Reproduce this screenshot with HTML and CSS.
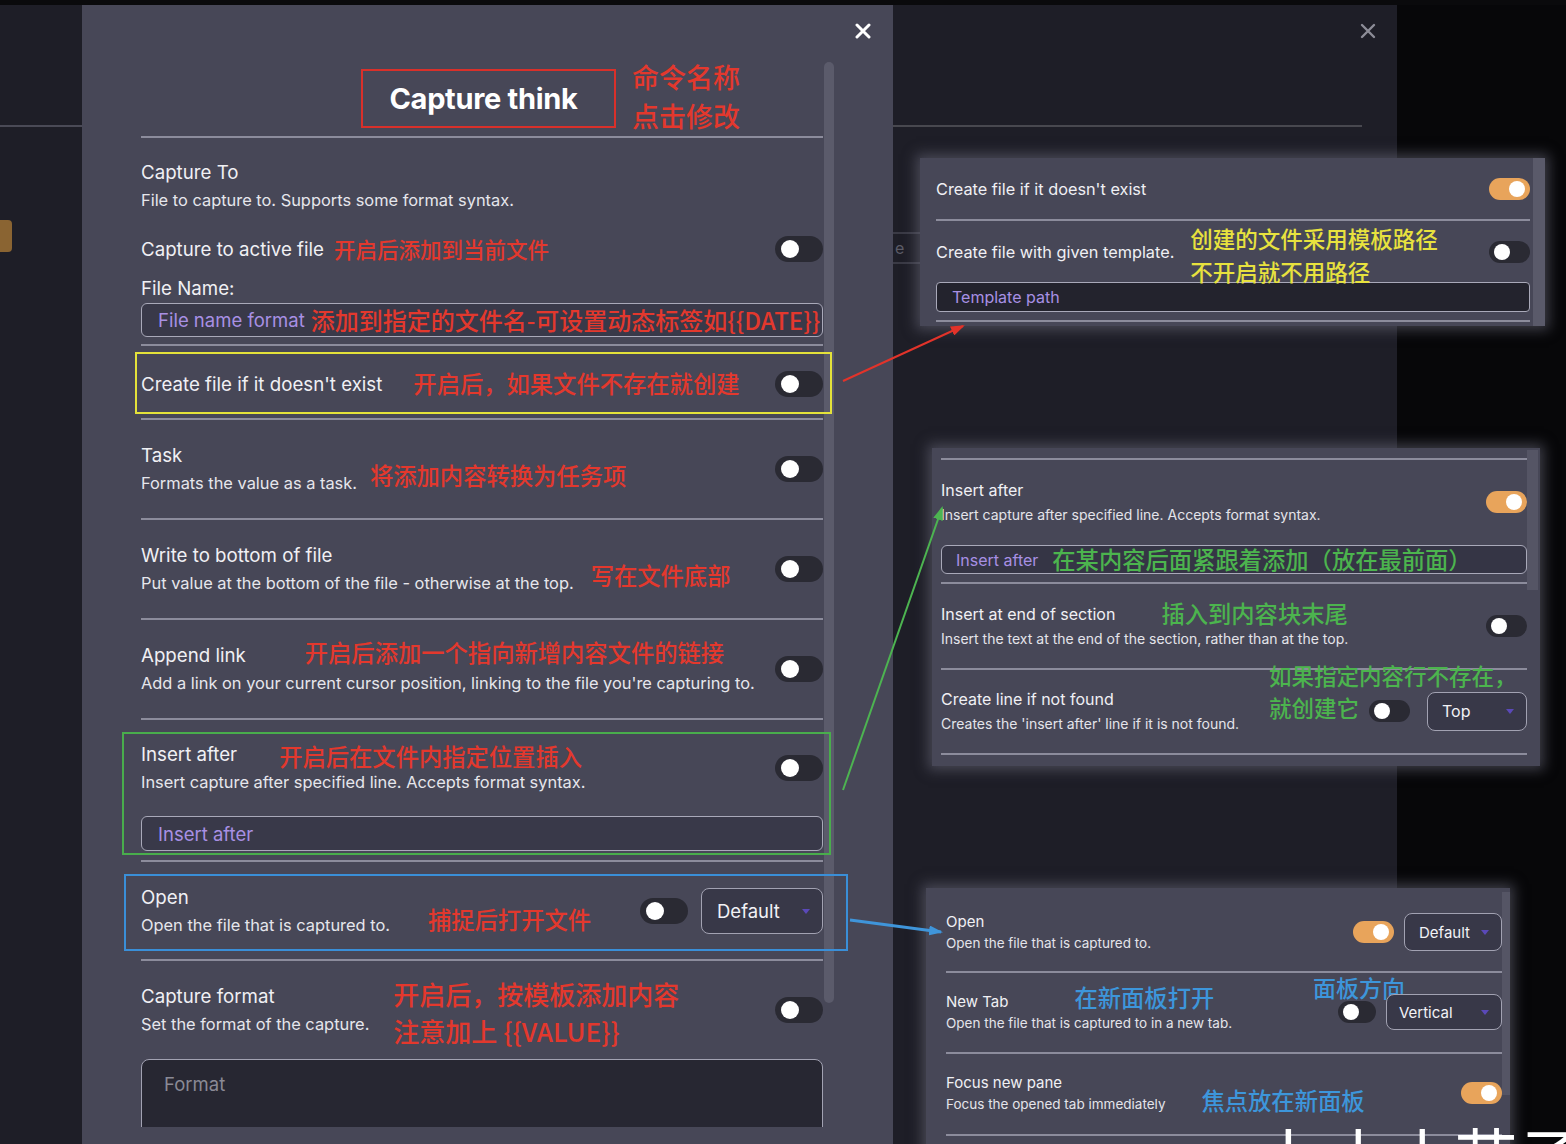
FILE: index.html
```html
<!DOCTYPE html>
<html lang="zh">
<head>
<meta charset="utf-8">
<title>Capture think</title>
<link rel="stylesheet" href="styles.css">
</head>
<body>
<div class="page">
  <div class="topstrip"></div>
  <div class="stage">
    <aside class="leftbg">
      <div class="leftline"></div>
      <div class="lefttab"></div>
    </aside>

    <section class="modal">
      <div class="modal-head">
        <svg class="close" width="16" height="16" viewBox="0 0 16 16"><path d="M2 2 L14 14 M14 2 L2 14" stroke="#fff" stroke-width="3" stroke-linecap="round"/></svg>
      </div>
      <div class="modal-scroll">
        <div class="modal-body">
          <div class="title-row">
            <div class="title-box">Capture think</div>
            <div class="note red title-note">命令名称<br>点击修改</div>
          </div>

          <div class="plain">
            <div class="name">Capture To</div>
            <div class="desc">File to capture to. Supports some format syntax.</div>
          </div>

          <div class="flat-row">
            <div class="name">Capture to active file<span class="note red n21 ml10">开启后添加到当前文件</span></div>
            <div class="toggle"><span class="knob"></span></div>
          </div>

          <div class="label">File Name:</div>
          <div class="input main-input"><span class="ph">File name format</span><span class="note red n24 ml6">添加到指定的文件名-可设置动态标签如{{DATE}}</span></div>

          <div class="item item-create">
            <div class="mark mark-yellow"></div>
            <div class="item-row">
              <div class="info"><div class="name">Create file if it doesn't exist<span class="note red n23 ml31">开启后，如果文件不存在就创建</span></div></div>
              <div class="toggle"><span class="knob"></span></div>
            </div>
          </div>

          <div class="item">
            <div class="item-row">
              <div class="info">
                <div class="name">Task</div>
                <div class="desc">Formats the value as a task.<span class="note red n23 ml13 up7">将添加内容转换为任务项</span></div>
              </div>
              <div class="toggle"><span class="knob"></span></div>
            </div>
          </div>

          <div class="item">
            <div class="item-row">
              <div class="info">
                <div class="name">Write to bottom of file</div>
                <div class="desc">Put value at the bottom of the file - otherwise at the top.<span class="note red n23 ml17 up7">写在文件底部</span></div>
              </div>
              <div class="toggle"><span class="knob"></span></div>
            </div>
          </div>

          <div class="item">
            <div class="item-row">
              <div class="info">
                <div class="name">Append link<span class="note red n23 ml59 up2">开启后添加一个指向新增内容文件的链接</span></div>
                <div class="desc">Add a link on your current cursor position, linking to the file you're capturing to.</div>
              </div>
              <div class="toggle"><span class="knob"></span></div>
            </div>
          </div>

          <div class="item item-insert">
            <div class="mark mark-green"></div>
            <div class="item-row">
              <div class="info">
                <div class="name">Insert after<span class="note red n23 ml42 down3">开启后在文件内指定位置插入</span></div>
                <div class="desc">Insert capture after specified line. Accepts format syntax.</div>
              </div>
              <div class="toggle"><span class="knob"></span></div>
            </div>
            <div class="input insert-input"><span class="ph">Insert after</span></div>
          </div>

          <div class="item item-open">
            <div class="mark mark-blue"></div>
            <div class="item-row">
              <div class="info">
                <div class="name">Open</div>
                <div class="desc">Open the file that is captured to.<span class="note red n23 ml38 up5">捕捉后打开文件</span></div>
              </div>
              <div class="controls">
                <div class="toggle"><span class="knob"></span></div>
                <div class="select main-select">Default<span class="caret"></span></div>
              </div>
            </div>
          </div>

          <div class="item item-format">
            <div class="item-row">
              <div class="info info-split">
                <div>
                  <div class="name">Capture format</div>
                  <div class="desc">Set the format of the capture.</div>
                </div>
                <div class="note red format-note">开启后，按模板添加内容<br>注意加上 {{VALUE}}</div>
              </div>
              <div class="toggle"><span class="knob"></span></div>
            </div>
            <div class="textarea">Format</div>
          </div>
        </div>
        <div class="scroll-col"><div class="scroll-thumb"></div></div>
      </div>
    </section>

    <section class="bgdialog">
      <div class="bg-head">
        <svg width="16" height="16" viewBox="0 0 16 16"><path d="M2 2 L14 14 M14 2 L2 14" stroke="#8c8c97" stroke-width="2.4" stroke-linecap="round"/></svg>
      </div>
      <div class="bg-line"></div>
      <div class="bg-field">e</div>
    </section>

    <div class="blackfill"></div>
  </div>

  <!-- zoomed detail panels pasted over the screenshot -->
  <div class="panel panel-a">
    <div class="pa-body">
      <div class="pa-row1">
        <span class="pname pa-name">Create file if it doesn't exist</span>
        <div class="toggle sm on"><span class="knob"></span></div>
      </div>
      <div class="pa-row2">
        <span class="pname pa-name">Create file with given template.</span>
        <div class="note yellow pa-note">创建的文件采用模板路径<br>不开启就不用路径</div>
        <div class="toggle sm"><span class="knob"></span></div>
      </div>
      <div class="input pa-input"><span class="ph">Template path</span></div>
      <div class="pa-line"></div>
    </div>
    <div class="pa-scroll"></div>
  </div>

  <div class="panel panel-b">
    <div class="pb-body">
      <div class="pb-item pb-first">
        <div class="item-row">
          <div class="info">
            <div class="pname lh24">Insert after</div>
            <div class="pdesc lh24">Insert capture after specified line. Accepts format syntax.</div>
          </div>
          <div class="toggle sm on"><span class="knob"></span></div>
        </div>
        <div class="input pb-input"><span class="ph">Insert after</span><span class="note green n23 ml14">在某内容后面紧跟着添加（放在最前面）</span></div>
      </div>
      <div class="pb-item pb-second">
        <div class="item-row">
          <div class="info">
            <div class="pname lh24">Insert at end of section<span class="note green n23 ml46">插入到内容块末尾</span></div>
            <div class="pdesc lh24">Insert the text at the end of the section, rather than at the top.</div>
          </div>
          <div class="toggle sm"><span class="knob"></span></div>
        </div>
      </div>
      <div class="pb-item pb-third">
        <div class="note green pb-note">如果指定内容行不存在，<br>就创建它</div>
        <div class="item-row">
          <div class="info">
            <div class="pname lh24">Create line if not found</div>
            <div class="pdesc lh24">Creates the 'insert after' line if it is not found.</div>
          </div>
          <div class="controls pb-controls">
            <div class="toggle sm"><span class="knob"></span></div>
            <div class="select pb-select">Top<span class="caret"></span></div>
          </div>
        </div>
      </div>
    </div>
    <div class="pb-scroll"><div class="pb-thumb"></div></div>
  </div>

  <div class="panel panel-c">
    <div class="pc-body">
      <div class="pc-item pc-first">
        <div class="item-row">
          <div class="info">
            <div class="pname c15">Open</div>
            <div class="pdesc c13">Open the file that is captured to.</div>
          </div>
          <div class="controls pc-controls">
            <div class="toggle sm on"><span class="knob"></span></div>
            <div class="select pc-select1">Default<span class="caret"></span></div>
          </div>
        </div>
      </div>
      <div class="pc-item pc-second">
        <div class="note blue n23 pc-dir">面板方向</div>
        <div class="item-row">
          <div class="info">
            <div class="pname c15">New Tab<span class="note blue n23 ml66 up3">在新面板打开</span></div>
            <div class="pdesc c13">Open the file that is captured to in a new tab.</div>
          </div>
          <div class="controls pc-controls">
            <div class="toggle sm2"><span class="knob"></span></div>
            <div class="select pc-select2">Vertical<span class="caret"></span></div>
          </div>
        </div>
      </div>
      <div class="pc-item pc-third">
        <div class="item-row">
          <div class="info">
            <div class="pname c15">Focus new pane</div>
            <div class="pdesc c13">Focus the opened tab immediately<span class="note blue n23 ml36 up3">焦点放在新面板</span></div>
          </div>
          <div class="toggle sm on"><span class="knob"></span></div>
        </div>
      </div>
      <div class="pc-line"></div>
    </div>
    <div class="pc-scroll"><div class="pc-thumb"></div></div>
  </div>

  <div class="watermark">卜小小艾子哈</div>

  <svg class="arrows" width="1566" height="1144" viewBox="0 0 1566 1144">
    <defs>
      <marker id="ar" markerWidth="14" markerHeight="10" refX="12" refY="5" orient="auto" markerUnits="userSpaceOnUse"><path d="M0 0 L14 5 L0 10 Z" fill="#e2332a"/></marker>
      <marker id="ag" markerWidth="14" markerHeight="10" refX="12" refY="5" orient="auto" markerUnits="userSpaceOnUse"><path d="M0 0 L14 5 L0 10 Z" fill="#4db451"/></marker>
      <marker id="ab" markerWidth="14" markerHeight="10" refX="12" refY="5" orient="auto" markerUnits="userSpaceOnUse"><path d="M0 0 L14 5 L0 10 Z" fill="#3f95da"/></marker>
    </defs>
    <line x1="843" y1="381" x2="963" y2="326" stroke="#e2332a" stroke-width="2"  marker-end="url(#ar)"/>
    <line x1="843" y1="790" x2="942" y2="508" stroke="#4db451" stroke-width="2" marker-end="url(#ag)"/>
    <line x1="850" y1="920" x2="941" y2="932" stroke="#3f95da" stroke-width="3" marker-end="url(#ab)"/>
  </svg>
</div>
</body>
</html>
```

FILE: styles.css
```css
* { box-sizing: border-box; }
html, body { margin: 0; padding: 0; }
body {
  background: #1d1d26;
  font-family: Inter, "Noto Sans CJK SC", sans-serif;
  color: #ececf2;
}
.page {
  position: relative;
  width: 1566px;
  height: 1144px;
  overflow: hidden;
}
.topstrip { height: 5px; background: #0a0a0c; }
.stage { display: flex; height: 1139px; }

/* left background */
.leftbg { width: 82px; background: #1e1e27; display: flex; flex-direction: column; }
.leftline { margin-top: 120px; height: 2px; background: #4a4a56; }
.lefttab { margin-top: 93px; width: 12px; height: 32px; background: #8a6432; border-radius: 0 4px 4px 0; }

/* main modal */
.modal {
  width: 811px;
  background: #474757;
  display: flex;
  flex-direction: column;
}
.modal-head {
  height: 52px;
  display: flex;
  justify-content: flex-end;
  align-items: center;
  padding-right: 22px;
}
.modal-scroll {
  display: flex;
  height: 1070px;
  overflow: hidden;
  padding-left: 59px;
}
.modal-body { width: 682px; flex: none; }
.scroll-col { width: 11px; padding-left: 1px; }
.scroll-thumb { margin-top: 5px; height: 941px; width: 10px; background: #5b5b6b; border-radius: 5px; }

.title-row {
  height: 81px;
  padding: 12px 0 0 220px;
  display: flex;
  align-items: flex-start;
  border-bottom: 2px solid #8c8c9c;
}
.title-box {
  width: 255px;
  height: 59px;
  border: 2px solid #d9302a;
  display: flex;
  align-items: center;
  justify-content: center;
  font-size: 29px;
  font-weight: 700;
  color: #fff;
  letter-spacing: -0.3px;
  padding-right: 10px;
}
.title-note {
  margin-left: 16px;
  margin-top: -12px;
  font-size: 27px;
  line-height: 39px;
}

.name, .desc {
  display: flex;
  align-items: center;
  height: 28px;
  white-space: nowrap;
}
.name { font-size: 18.7px; color: #f0f0f4; }
.desc { font-size: 16.4px; color: #e6e6ec; }

.plain { padding-top: 20px; }
.flat-row {
  margin-top: 21px;
  display: flex;
  align-items: center;
  justify-content: space-between;
}
.label { margin-top: 12px; font-size: 18.7px; line-height: 28px; color: #f0f0f4; }

.input {
  border: 1.5px solid #a9a9b9;
  border-radius: 6px;
  background: #393949;
  display: flex;
  align-items: center;
  white-space: nowrap;
  overflow: hidden;
}
.ph { color: #a890e4; flex: none; }
.main-input { height: 34px; padding-left: 16px; font-size: 18.5px; margin-bottom: 7px; }
.insert-input { height: 35px; padding-left: 16px; font-size: 18.5px; margin-top: 20px; }

.item { position: relative; border-top: 2px solid #8c8c9c; padding: 21px 0 21px; }
.item-row { display: flex; align-items: center; }
.info { flex: 1; min-width: 0; }
.controls { display: flex; align-items: center; }

.item-create { padding: 24px 0 20px; }
.item-insert { padding: 20px 0 9px; }
.item-open { padding: 21px 0 20px; }
.item-format { padding: 21px 0 0; }

.mark { position: absolute; border: 2px solid; pointer-events: none; }
.mark-yellow { border-color: #e4e23a; top: 6px; left: -6px; right: -9px; height: 62px; }
.mark-green { border-color: #49ad4c; top: 12px; left: -19px; right: -8px; height: 123px; }
.mark-blue { border-color: #3a8fd8; top: 12px; left: -17px; right: -25px; height: 77px; }

/* toggles */
.toggle {
  width: 48px;
  height: 26px;
  border-radius: 13px;
  background: #2a2a33;
  position: relative;
  flex: none;
}
.toggle .knob {
  position: absolute;
  top: 4px;
  left: 6px;
  width: 18px;
  height: 18px;
  border-radius: 50%;
  background: #fff;
}
.toggle.sm { width: 41px; height: 22px; border-radius: 11px; }
.toggle.sm2 { width: 38px; height: 22px; border-radius: 11px; }
.toggle.sm .knob, .toggle.sm2 .knob { top: 3px; left: 5px; width: 16px; height: 16px; }
.toggle.on { background: #e8a45b; }
.toggle.on .knob { left: auto; right: 5px; }

.item-open .controls { gap: 13px; }
.select {
  border: 1.5px solid #a2a2b2;
  border-radius: 8px;
  background: #383848;
  display: flex;
  align-items: center;
  position: relative;
  color: #f2f2f6;
}
.caret {
  position: absolute;
  right: 12px;
  top: 50%;
  margin-top: -2px;
  width: 0; height: 0;
  border-left: 4px solid transparent;
  border-right: 4px solid transparent;
  border-top: 5px solid #5a49b8;
}
.main-select { width: 122px; height: 46px; padding-left: 15px; font-size: 18.5px; }

.info-split { display: flex; align-items: flex-start; }
.format-note {
  margin-left: 24px;
  margin-top: -7px;
  height: 56px;
  font-size: 26px;
  line-height: 37px;
  white-space: nowrap;
}
.textarea {
  margin-top: 21px;
  height: 90px;
  border: 1.5px solid #a2a2b2;
  border-radius: 8px;
  background: #272732;
  padding: 13px 22px;
  font-size: 18.5px;
  color: #8a8a96;
}

/* annotations */
.note { font-family: "Noto Sans CJK SC", sans-serif; font-weight: 500; white-space: nowrap; }
span.note { display: block; flex: none; line-height: 1; }
.red { color: #e3382d; }
.yellow { color: #e8e23e; }
.green { color: #4cb44e; }
.blue { color: #3d96db; }
.n21 { font-size: 21.5px; }
.n22 { font-size: 22px; }
.n23 { font-size: 23.3px; }
.n24 { font-size: 24px; }
.ml6 { margin-left: 6px; }
.ml10 { margin-left: 10px; }
.ml13 { margin-left: 13px; }
.ml14 { margin-left: 14px; }
.ml17 { margin-left: 17px; }
.ml31 { margin-left: 31px; }
.ml36 { margin-left: 36px; }
.ml38 { margin-left: 38px; }
.ml42 { margin-left: 42px; }
.ml46 { margin-left: 46px; }
.ml59 { margin-left: 59px; }
.ml66 { margin-left: 66px; }
.up7 { margin-top: -14px; }
.up5 { margin-top: -10px; }
.up3 { margin-top: -6px; }
.up2 { margin-top: -4px; }
.down3 { margin-top: 6px; }

/* background dialog on the right */
.bgdialog { width: 504px; background: #1e1e27; display: flex; flex-direction: column; }
.bg-head { height: 52px; display: flex; justify-content: flex-end; align-items: center; padding-right: 21px; }
.bg-line { margin-top: 68px; height: 2px; width: 469px; background: #48484f; }
.bg-field {
  margin-top: 105px;
  width: 40px;
  height: 32px;
  border-top: 2px solid #3a3a45;
  border-bottom: 2px solid #3a3a45;
  font-size: 16px;
  line-height: 28px;
  color: #5c5c68;
  padding-left: 2px;
}
.blackfill { flex: 1; background: #070709; }

/* pasted zoom panels */
.panel {
  position: absolute;
  background: #474757;
  display: flex;
  box-shadow: 0 0 12px 4px rgba(105, 105, 122, 0.55);
}
.pname { font-size: 16px; color: #f0f0f4; white-space: nowrap; }
.pdesc { font-size: 14px; color: #e4e4ea; white-space: nowrap; }
.pa-name { font-size: 16.3px; }
.lh24 { display: flex; align-items: center; height: 24px; }
.c15 { display: flex; align-items: center; font-size: 15px; height: 22px; }
.c13 { display: flex; align-items: center; font-size: 13.5px; height: 22px; }

.panel-a { left: 920px; top: 158px; width: 625px; height: 168px; }
.pa-body { width: 610px; padding-left: 16px; }
.pa-scroll { width: 12px; margin-left: 3px; background: #5a5a6a; }
.pa-row1 {
  display: flex; align-items: center; justify-content: space-between;
  padding: 17px 0 16px; line-height: 28px;
  border-bottom: 2px solid #8c8c9c;
}
.pa-row2 { display: flex; align-items: center; height: 61px; }
.pa-note { margin-left: 16px; margin-top: 6px; font-size: 22.5px; line-height: 33px; }
.pa-row2 .toggle { margin-left: auto; }
.pa-input { height: 30px; padding-left: 15px; font-size: 16px; background: #23232d; border-radius: 4px; }
.pa-line { margin-top: 8px; height: 2px; background: #8c8c9c; }

.panel-b { left: 932px; top: 448px; width: 608px; height: 318px; padding-top: 10px; }
.pb-body { width: 595px; padding-left: 9px; }
.pb-scroll { width: 11px; }
.pb-thumb { margin-top: -8px; height: 140px; background: #555565; }
.pb-item { position: relative; border-top: 2px solid #8c8c9c; }
.pb-first { padding: 18px 0 8px; }
.pb-second { padding: 18px 0 18px; }
.pb-third { padding: 17px 0 18px; border-bottom: 2px solid #8c8c9c; }
.pb-input { margin-top: 19px; height: 29px; padding-left: 14px; font-size: 16px; background: #353545; }
.pb-note { position: absolute; left: 328px; top: -11px; font-size: 22.5px; line-height: 32px; }
.pb-controls { gap: 17px; }
.pb-select { width: 100px; height: 39px; padding-left: 14px; font-size: 16px; }

.panel-c { left: 926px; top: 888px; width: 584px; height: 270px; }
.pc-body { width: 576px; padding-left: 20px; }
.pc-scroll { width: 8px; }
.pc-thumb { margin-top: 4px; height: 203px; background: #555565; }
.pc-item { position: relative; }
.pc-first { padding: 22px 0 17px; border-bottom: 2px solid #8c8c9c; }
.pc-second { padding: 17px 0 18px; border-bottom: 2px solid #8c8c9c; }
.pc-third { padding: 17px 0 19px; }
.pc-line { height: 2px; background: #8c8c9c; }
.pc-controls { gap: 10px; }
.pc-select1 { width: 98px; height: 38px; padding-left: 14px; font-size: 15px; }
.pc-select2 { width: 116px; height: 36px; padding-left: 12px; font-size: 15px; }
.pc-dir { position: absolute; left: 367px; top: -1px; font-size: 23px; line-height: 30px; }

.watermark {
  position: absolute;
  left: 1262px;
  top: 1122px;
  font-family: "Noto Sans CJK SC", sans-serif;
  font-size: 64px;
  line-height: 1;
  color: #fff;
  white-space: nowrap;
}
.arrows { position: absolute; left: 0; top: 0; pointer-events: none; }
```
